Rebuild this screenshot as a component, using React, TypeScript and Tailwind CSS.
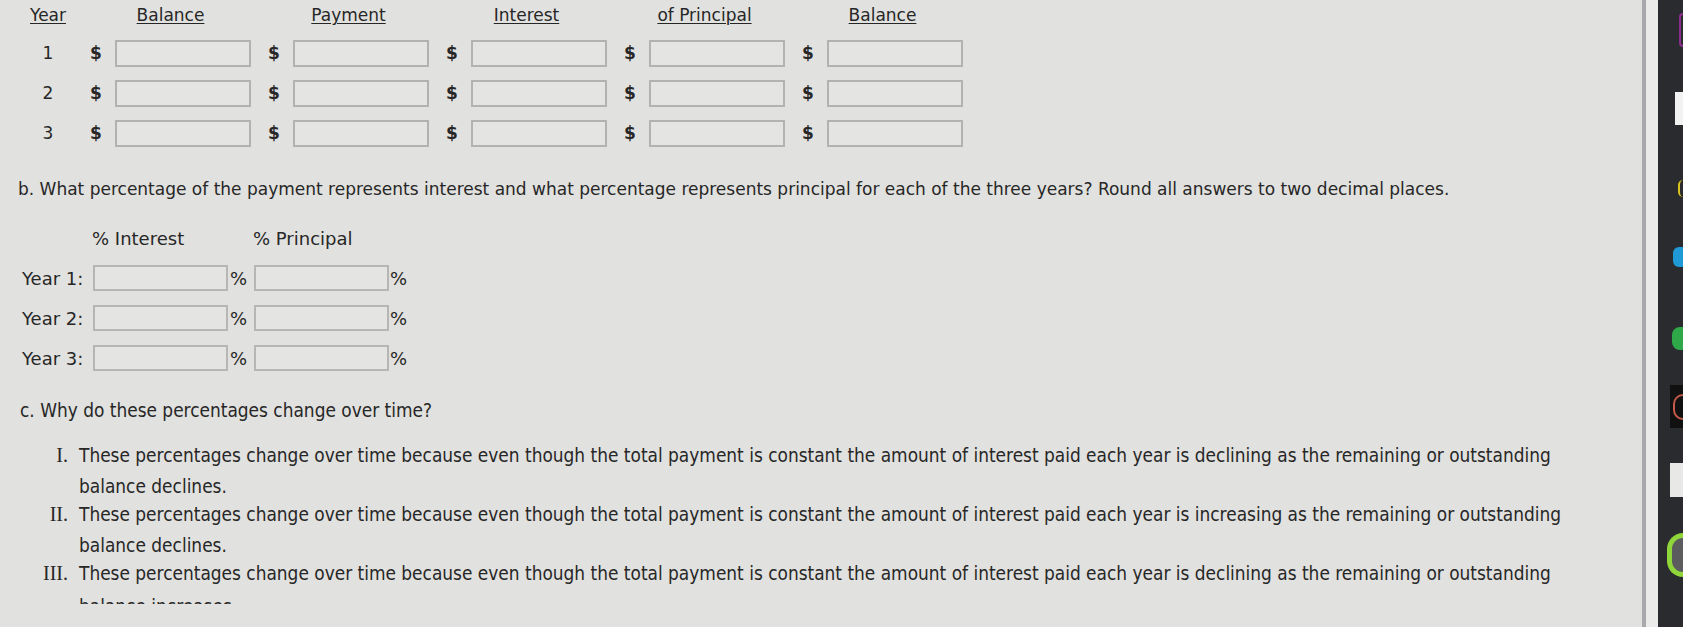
import React from "react";

const headers = ["Balance", "Payment", "Interest", "of Principal", "Balance"];

function MoneyRow({ year }: { year: number }) {
  return (
    <div className="flex items-center h-[27px]">
      <div className="w-[38px] text-center">{year}</div>
      <div className="ml-[23px] flex gap-[17px]">
        {headers.map((h, i) => (
          <div key={h + i} className="flex items-center w-[161px]">
            <span className="w-[25px] font-bold">$</span>
            <div className="w-[136px] h-[27px] border-2 border-[#b2b2b0] bg-[#e4e4e2]" />
          </div>
        ))}
      </div>
    </div>
  );
}

function PercentRow({ label }: { label: string }) {
  return (
    <div className="flex items-center h-[26px]">
      <div className="w-[71px]">{label}</div>
      <div className="w-[135px] h-[26px] border-2 border-[#b6b6b4] bg-[#e4e4e2]" />
      <span className="w-[26px] pl-[2px]">%</span>
      <div className="w-[135px] h-[26px] border-2 border-[#b6b6b4] bg-[#e4e4e2]" />
      <span className="pl-[1px]">%</span>
    </div>
  );
}

const options = [
  {
    n: "I.",
    a: "These percentages change over time because even though the total payment is constant the amount of interest paid each year is declining as the remaining or outstanding",
    b: "balance declines.",
  },
  {
    n: "II.",
    a: "These percentages change over time because even though the total payment is constant the amount of interest paid each year is increasing as the remaining or outstanding",
    b: "balance declines.",
  },
  {
    n: "III.",
    a: "These percentages change over time because even though the total payment is constant the amount of interest paid each year is declining as the remaining or outstanding",
    b: null,
  },
];

export default function App() {
  return (
    <div className="w-[1683px] h-[627px] overflow-hidden flex bg-[#e1e1df] text-[#272727] font-['DejaVu_Sans',sans-serif]">
      <div className="w-[1642px] shrink-0">
        {/* part a table */}
        <div className="pt-[6px] pl-[29px] text-[17px]">
          <div className="flex items-center h-[20px]">
            <div className="w-[38px] text-center underline underline-offset-2">Year</div>
            <div className="ml-[23px] flex gap-[17px]">
              {headers.map((h, i) => (
                <div key={h + i} className="w-[161px] text-center">
                  <span className="underline underline-offset-2">{h}</span>
                </div>
              ))}
            </div>
          </div>
          <div className="mt-[14px] flex flex-col gap-[13px]">
            <MoneyRow year={1} />
            <MoneyRow year={2} />
            <MoneyRow year={3} />
          </div>
        </div>

        {/* part b */}
        <div className="mt-[32px] pl-[18px] text-[17px] leading-[20px] whitespace-nowrap">
          b. What percentage of the payment represents interest and what percentage represents principal for each of the three years? Round all answers to two decimal places.
        </div>
        <div className="mt-[30px] pl-[22px] text-[18px]">
          <div className="flex h-[20px] leading-[20px]">
            <div className="ml-[70px] w-[161px]">% Interest</div>
            <div>% Principal</div>
          </div>
          <div className="mt-[16px] flex flex-col gap-[14px]">
            <PercentRow label="Year 1:" />
            <PercentRow label="Year 2:" />
            <PercentRow label="Year 3:" />
          </div>
        </div>

        {/* part c */}
        <div className="font-['DejaVu_Sans_Condensed','DejaVu_Sans',sans-serif] [font-stretch:condensed] text-[18.9px]">
          <div className="mt-[28px] pl-[20px] leading-[22px]">c. Why do these percentages change over time?</div>
          <div className="mt-[19px] flex flex-col">
            {options.map((o, i) => (
              <div key={o.n} className={"flex leading-[31px] " + (i > 0 ? "-mt-[3px]" : "")}>
                <div className="w-[68px] text-right font-['Liberation_Serif',serif] text-[20px]">{o.n}</div>
                <div className="ml-[11px] whitespace-nowrap">
                  <div>{o.a}</div>
                  {o.b && <div>{o.b}</div>}
                </div>
              </div>
            ))}
            <div className="mt-[8px] ml-[79px] h-[7px] overflow-hidden leading-[19px]">balance increases.</div>
          </div>
        </div>
      </div>

      {/* monitor edge */}
      <div className="w-[4px] bg-[#a9a9ab]" />
      <div className="w-[12px] bg-[#ebebea]" />
      <div className="flex-1 bg-[#2a2b2e] flex flex-col items-end">
        <div className="mt-[13px] w-[4px] h-[34px] border-l-2 border-t-2 border-b-2 border-[#8a2d8c] rounded-l-[4px]" />
        <div className="mt-[45px] w-[8px] h-[33px] bg-[#f2f2f2]" />
        <div className="mt-[55px] w-[5px] h-[17px] border-l-2 border-[#d9c21c] rounded-l-full" />
        <div className="mt-[50px] w-[10px] h-[20px] bg-[#1f9ad6] rounded-l-[6px]" />
        <div className="mt-[60px] w-[11px] h-[23px] bg-[#2fa84a] rounded-l-[8px]" />
        <div className="mt-[35px] w-[13px] h-[43px] bg-[#111111] flex items-center justify-end">
          <div className="w-[10px] h-[26px] border-l-2 border-t-2 border-b-2 border-[#c45a4a] rounded-l-full" />
        </div>
        <div className="mt-[35px] w-[13px] h-[34px] bg-[#e8e8e6]" />
        <div className="mt-[36px] w-[16px] h-[44px] border-l-[5px] border-t-[5px] border-b-[5px] border-[#8fd63a] rounded-l-full bg-[#5a5c5e]" />
      </div>
    </div>
  );
}
